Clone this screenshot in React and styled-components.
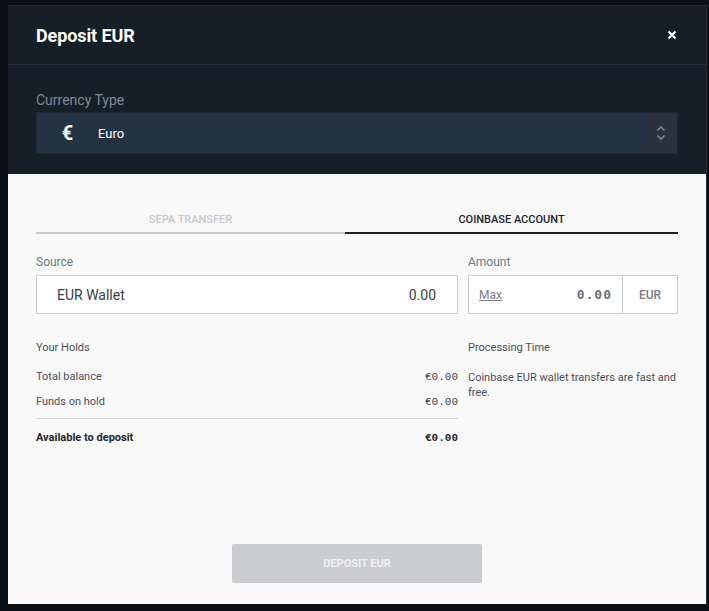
import styled, { createGlobalStyle } from 'styled-components';

const GlobalStyle = createGlobalStyle`
  html, body {
    margin: 0;
    padding: 0;
    background: #0b1017;
    font-family: Roboto, 'Liberation Sans', sans-serif;
  }
`;

const holds = [
  { label: 'Total balance', value: '€0.00' },
  { label: 'Funds on hold', value: '€0.00' },
];

const ChevronsIcon = () => (
  <svg width='10' height='16' viewBox='0 0 10 16' fill='none'>
    <path d='M1.5 5.5L5 2L8.5 5.5' stroke='#7c8591' strokeWidth='1.6' />
    <path d='M1.5 10.5L5 14L8.5 10.5' stroke='#7c8591' strokeWidth='1.6' />
  </svg>
);

const CloseIcon = () => (
  <svg width='10' height='10' viewBox='0 0 10 10'>
    <path d='M1.5 1.5L8.5 8.5M8.5 1.5L1.5 8.5' stroke='#fff' strokeWidth='2' />
  </svg>
);

const App = () => {
  return (
    <>
      <GlobalStyle />
      <Page>
        <Modal>
          <Header>
            <h1>Deposit EUR</h1>
            <CloseButton>
              <CloseIcon />
            </CloseButton>
          </Header>
          <TopSection>
            <DarkLabel>Currency Type</DarkLabel>
            <Select>
              <div className='symbol'>€</div>
              <div className='name'>Euro</div>
              <div className='arrows'>
                <ChevronsIcon />
              </div>
            </Select>
          </TopSection>
          <Body>
            <Tabs>
              <Tab $width={309}>SEPA TRANSFER</Tab>
              <Tab $width={333} $active>
                COINBASE ACCOUNT
              </Tab>
            </Tabs>
            <FieldsRow>
              <Field $width={422}>
                <Label>Source</Label>
                <SourceInput>
                  <span>EUR Wallet</span>
                  <span>0.00</span>
                </SourceInput>
              </Field>
              <Field $width={210}>
                <Label>Amount</Label>
                <AmountInput>
                  <div className='main'>
                    <a>Max</a>
                    <span className='value'>0.00</span>
                  </div>
                  <div className='unit'>EUR</div>
                </AmountInput>
              </Field>
            </FieldsRow>
            <InfoRow>
              <Holds>
                <SmallTitle>Your Holds</SmallTitle>
                {holds.map((hold, i) => (
                  <HoldRow key={hold.label} $last={i === holds.length - 1}>
                    <span>{hold.label}</span>
                    <Money>{hold.value}</Money>
                  </HoldRow>
                ))}
                <TotalRow>
                  <span>Available to deposit</span>
                  <Money $bold>€0.00</Money>
                </TotalRow>
              </Holds>
              <Processing>
                <SmallTitle>Processing Time</SmallTitle>
                <p>Coinbase EUR wallet transfers are fast and free.</p>
              </Processing>
            </InfoRow>
            <Footer>
              <SubmitButton disabled>DEPOSIT EUR</SubmitButton>
            </Footer>
          </Body>
        </Modal>
      </Page>
    </>
  );
};

const Page = styled.div`
  width: 709px;
  height: 611px;
  padding: 5px 0 0 8px;
  box-sizing: border-box;
`;

const Modal = styled.div`
  width: 699px;
  background: #161e27;
  border-right: 1px solid #222b35;
  border-top: 1px solid #222b35;
  box-sizing: border-box;
`;

const Header = styled.div`
  display: flex;
  align-items: center;
  justify-content: space-between;
  height: 58px;
  padding: 0 28px 0 28px;
  border-bottom: 1px solid #2a333d;

  h1 {
    margin: 0;
    color: #ffffff;
    font-size: 18px;
    font-weight: 700;
    letter-spacing: -0.1px;
  }
`;

const CloseButton = styled.div`
  display: flex;
  align-items: center;
  justify-content: center;
  width: 12px;
  height: 12px;
`;

const TopSection = styled.div`
  padding: 27px 28px 20px 28px;
`;

const DarkLabel = styled.div`
  color: #808a96;
  font-size: 14px;
  line-height: 16px;
  margin-bottom: 4px;
`;

const Select = styled.div`
  display: flex;
  align-items: center;
  height: 42px;
  background: #253241;
  border: 1px solid #1e2935;
  box-sizing: border-box;

  .symbol {
    width: 27px;
    margin-left: 17px;
    color: #ffffff;
    font-size: 20px;
    font-weight: 700;
    text-align: center;
  }

  .name {
    flex: 1;
    margin-left: 17px;
    color: #ffffff;
    font-size: 13px;
  }

  .arrows {
    display: flex;
    align-items: center;
    justify-content: center;
    width: 32px;
    height: 100%;
    background: #2a333d;
  }
`;

const Body = styled.div`
  background: #f9f9f9;
  height: 430px;
  padding: 40px 28px 0 28px;
  box-sizing: border-box;
  display: flex;
  flex-direction: column;
`;

const Tabs = styled.div`
  display: flex;
`;

const Tab = styled.div`
  width: ${({ $width }) => $width}px;
  text-align: center;
  font-size: 11px;
  font-weight: 500;
  line-height: 12px;
  padding-bottom: 6px;
  color: ${({ $active }) => ($active ? '#1c232b' : '#c5c8cc')};
  border-bottom: 2px solid ${({ $active }) => ($active ? '#1c232b' : '#c8cacd')};
`;

const FieldsRow = styled.div`
  display: flex;
  gap: 10px;
  margin-top: 21px;
`;

const Field = styled.div`
  display: flex;
  flex-direction: column;
  width: ${({ $width }) => $width}px;
`;

const Label = styled.div`
  color: #6f7781;
  font-size: 12px;
  line-height: 14px;
  margin-bottom: 6px;
`;

const SourceInput = styled.div`
  display: flex;
  align-items: center;
  justify-content: space-between;
  height: 39px;
  padding: 0 21px 0 20px;
  background: #ffffff;
  border: 1px solid #cccdd0;
  box-sizing: border-box;
  color: #3a3f45;
  font-size: 14px;
`;

const AmountInput = styled.div`
  display: flex;
  height: 39px;
  background: #ffffff;
  border: 1px solid #cccdd0;
  box-sizing: border-box;

  .main {
    flex: 1;
    display: flex;
    align-items: center;
    justify-content: space-between;
    padding: 0 10px 0 10px;
    border-right: 1px solid #cccdd0;
  }

  a {
    color: #767d86;
    font-size: 12px;
    text-decoration: underline;
  }

  .value {
    color: #6b727b;
    font-family: 'DejaVu Sans Mono', 'Liberation Mono', monospace;
    font-size: 13px;
    font-weight: 700;
    letter-spacing: 1px;
  }

  .unit {
    width: 54px;
    display: flex;
    align-items: center;
    justify-content: center;
    color: #767d86;
    font-size: 12px;
    font-weight: 500;
  }
`;

const InfoRow = styled.div`
  display: flex;
  gap: 10px;
  margin-top: 27px;
`;

const Holds = styled.div`
  width: 422px;
  display: flex;
  flex-direction: column;
`;

const SmallTitle = styled.div`
  color: #4a5058;
  font-size: 11px;
  line-height: 13px;
  margin-bottom: 16px;
`;

const HoldRow = styled.div`
  display: flex;
  align-items: center;
  justify-content: space-between;
  height: 25px;
  color: #4a5058;
  font-size: 11px;
  margin-top: -6px;
  margin-bottom: 6px;
  padding-bottom: ${({ $last }) => ($last ? '4px' : '0')};
  border-bottom: ${({ $last }) => ($last ? '1px solid #cfd1d3' : 'none')};
`;

const TotalRow = styled.div`
  display: flex;
  align-items: center;
  justify-content: space-between;
  margin-top: 6px;
  color: #22272d;
  font-size: 11px;
  font-weight: 700;
`;

const Money = styled.span`
  font-family: 'Liberation Mono', monospace;
  font-size: 11px;
  font-weight: ${({ $bold }) => ($bold ? 700 : 400)};
  color: ${({ $bold }) => ($bold ? '#22272d' : '#3f454c')};
`;

const Processing = styled.div`
  width: 210px;

  p {
    margin: 0;
    color: #4a5058;
    font-size: 11px;
    line-height: 15px;
  }
`;

const Footer = styled.div`
  display: flex;
  justify-content: center;
  margin-top: auto;
  padding-bottom: 21px;
`;

const SubmitButton = styled.button`
  width: 250px;
  height: 39px;
  border: none;
  border-radius: 2px;
  background: #cbccd0;
  color: #f1f2f3;
  font-family: Roboto, 'Liberation Sans', sans-serif;
  font-size: 11px;
  font-weight: 700;
`;

export default App;
